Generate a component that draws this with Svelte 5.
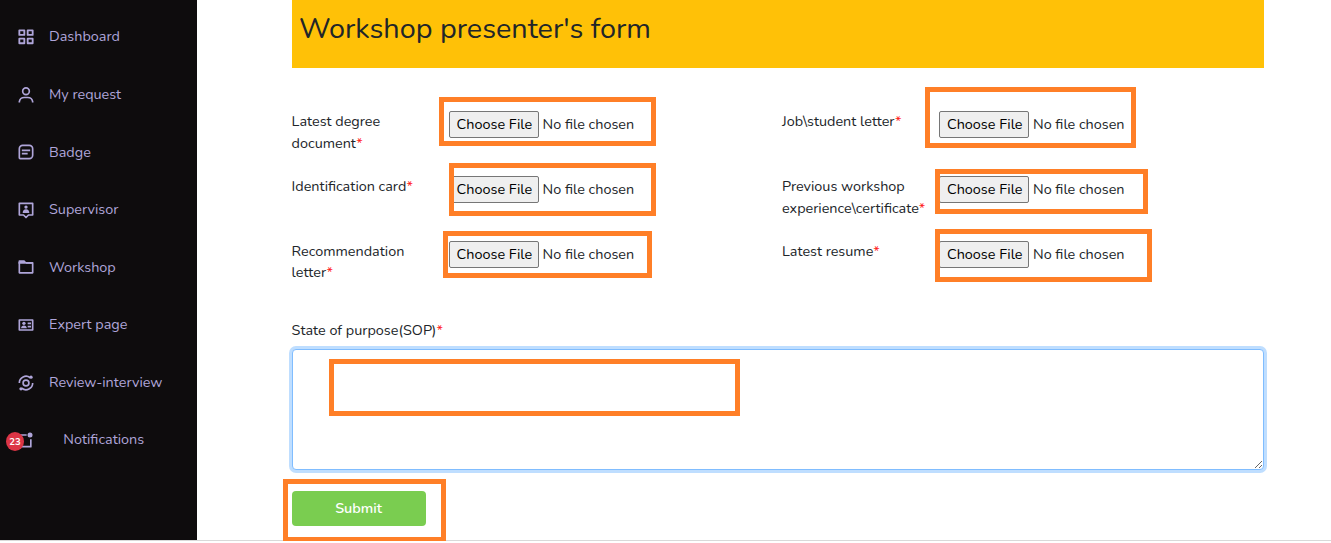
<script>
  const menu = [
    { icon: 'grid', label: 'Dashboard' },
    { icon: 'user', label: 'My request' },
    { icon: 'message', label: 'Badge' },
    { icon: 'pin', label: 'Supervisor' },
    { icon: 'folder', label: 'Workshop' },
    { icon: 'card', label: 'Expert page' },
    { icon: 'analyse', label: 'Review-interview' },
    { icon: 'notification', label: 'Notifications', count: 23 }
  ];

  const fields = [
    ['Latest degree', 'document'],
    ['Job\\student letter'],
    ['Identification card'],
    ['Previous workshop', 'experience\\certificate'],
    ['Recommendation', 'letter'],
    ['Latest resume']
  ];

  const highlights = [
    [439, 97, 217, 49],
    [449, 163, 207, 53],
    [443, 231, 209, 47],
    [925, 87, 211, 61],
    [935, 169, 213, 45],
    [935, 229, 217, 53],
    [329, 359, 411, 57],
    [283, 479, 163, 63]
  ];
</script>

<div class="page">
  <nav class="sidebar">
    {#each menu as item}
      <div class="item" class:wide={item.count}>
        <svg class="icon" viewBox="0 0 24 24" fill="none" stroke="currentColor" stroke-width="2">
          {#if item.icon === 'grid'}
            <path d="M4 4h6v5.5H4zM14 4h6v5.5h-6zM4 14h6v5.5H4zM14 14h6v5.5h-6z" stroke-width="2.2" stroke-linejoin="round" />
          {:else if item.icon === 'user'}
            <circle cx="12" cy="7.5" r="4" />
            <path d="M4 21v-1a6 6 0 0 1 6-5h4a6 6 0 0 1 6 5v1" />
          {:else if item.icon === 'message'}
            <path d="M8 4h8a4 4 0 0 1 4 4v8a4 4 0 0 1-4 4H5a1 1 0 0 1-1-1V8a4 4 0 0 1 4-4z" />
            <path d="M7 10h10M7 14h7" />
          {:else if item.icon === 'pin'}
            <path d="M4 4h16v14h-5l-3 3-3-3H4z" stroke-linejoin="round" />
            <circle cx="12" cy="8.5" r="2" fill="currentColor" stroke="none" />
            <path d="M8 15.500c0-2.500 1.500-4.500 4-4.500s4 2 4 4.500z" fill="currentColor" stroke="none" />
          {:else if item.icon === 'folder'}
            <path d="M4 6v13h16V7h-8" stroke-linejoin="round" />
            <path d="M3 8V5a1 1 0 0 1 1-1h6l2 2h8v2z" fill="currentColor" stroke="none" />
          {:else if item.icon === 'card'}
            <path d="M4 6h16v12H4z" stroke-linejoin="round" />
            <circle cx="9.500" cy="10" r="2" fill="currentColor" stroke="none" />
            <path d="M6 16c0-2 1.500-3.500 3.500-3.500s3.500 1.500 3.500 3.500z" fill="currentColor" stroke="none" />
            <path d="M14 10h4M14 14h4" />
          {:else if item.icon === 'analyse'}
            <circle cx="12" cy="12" r="3.500" />
            <path d="M4 12a8 8 0 0 1 13-6.300M20 12a8 8 0 0 1-13 6.300" />
            <circle cx="18" cy="5" r="2" fill="currentColor" stroke="none" />
            <circle cx="6" cy="19" r="2" fill="currentColor" stroke="none" />
          {:else}
            <path d="M14 6H4v14h15V11" stroke-linejoin="round" />
            <circle cx="18" cy="6" r="3" fill="currentColor" stroke="none" />
          {/if}
        </svg>
        {#if item.count}<b class="count">{item.count}</b>{/if}
        <span>{item.label}</span>
      </div>
    {/each}
  </nav>

  <main class="content">
    <h1>Workshop presenter's form</h1>

    <div class="fields">
      {#each fields as lines}
        <div class="field">
          <div class="label">
            {#each lines as text, i}
              <div>{text}{#if i === lines.length - 1}<i>*</i>{/if}</div>
            {/each}
          </div>
          <div class="file">
            <button type="button">Choose File</button>
            <span>No file chosen</span>
          </div>
        </div>
      {/each}
    </div>

    <label class="sop" for="sop">State of purpose(SOP)<i>*</i></label>
    <textarea id="sop"></textarea>
    <button class="submit" type="button">Submit</button>
  </main>

  {#each highlights as [x, y, w, h]}
    <div class="highlight" style="left:{x}px;top:{y}px;width:{w}px;height:{h}px"></div>
  {/each}
</div>

<style>
  :global(body) {
    margin: 0;
    background: #fff;
  }
  .page,
  .page * {
    box-sizing: border-box;
  }
  .page {
    position: relative;
    display: flex;
    height: 541px;
    border-bottom: 1px solid #d9d9d9;
    font: 400 14.4px/21.6px Nunito, Lato, sans-serif;
    color: #212529;
  }
  .sidebar {
    width: 197px;
    flex: none;
    padding-top: 8.42px;
    background: #0e0c0d;
    color: #afa5d9;
  }
  .item {
    position: relative;
    display: flex;
    align-items: center;
    gap: 13.5px;
    height: 57.57px;
    padding-left: 15.5px;
  }
  .item.wide {
    gap: 28px;
  }
  .icon {
    width: 20px;
    height: 20px;
    flex: none;
  }
  .item.wide .icon {
    margin-left: -0.2px;
  }
  .count {
    position: absolute;
    left: 6px;
    top: 20.5px;
    width: 18px;
    height: 19px;
    border-radius: 50%;
    background: #dc3545;
    color: #fff;
    font-size: 9.5px;
    line-height: 19px;
    text-align: center;
  }
  .content {
    width: 972.4px;
    margin-left: 94.6px;
    display: flex;
    flex-direction: column;
    align-items: flex-start;
  }
  h1 {
    width: 100%;
    height: 68px;
    margin: 0;
    padding: 11px 7.4px;
    background: #ffc107;
    font-size: 28.8px;
    font-weight: 400;
    line-height: 35px;
  }
  .fields {
    display: grid;
    grid-template-columns: 490.4px 482px;
    grid-auto-rows: 64.8px;
    margin-top: 43.2px;
  }
  .field {
    display: flex;
  }
  .label {
    width: 157px;
    flex: none;
  }
  i {
    font-style: normal;
    color: #ff1a1a;
  }
  .file {
    display: flex;
    align-items: center;
    gap: 4px;
    height: 27.2px;
  }
  .file button {
    width: 90px;
    height: 27px;
    padding: 0.4px 0 0 7px;
    text-align: left;
    border: 1px solid #767676;
    border-radius: 2px;
    background: #efefef;
    color: #000;
    font: inherit;
  }
  .file span {
    padding-top: 0.4px;
  }
  .sop {
    margin-top: 14.4px;
  }
  textarea {
    width: 972.4px;
    height: 121px;
    flex: none;
    margin: 7px 0 0;
    border: 1px solid #80bdff;
    border-radius: 4px;
    outline: 0;
    box-shadow: 0 0 0 3px #bfdeff;
  }
  .submit {
    width: 134px;
    height: 35px;
    margin-top: 21px;
    padding: 2px 0 0;
    border: 0;
    border-radius: 4px;
    background: #7acd50;
    color: #fff;
    font: inherit;
    font-weight: 600;
  }
  .highlight {
    position: absolute;
    border: 5px solid #ff7f27;
  }
</style>
